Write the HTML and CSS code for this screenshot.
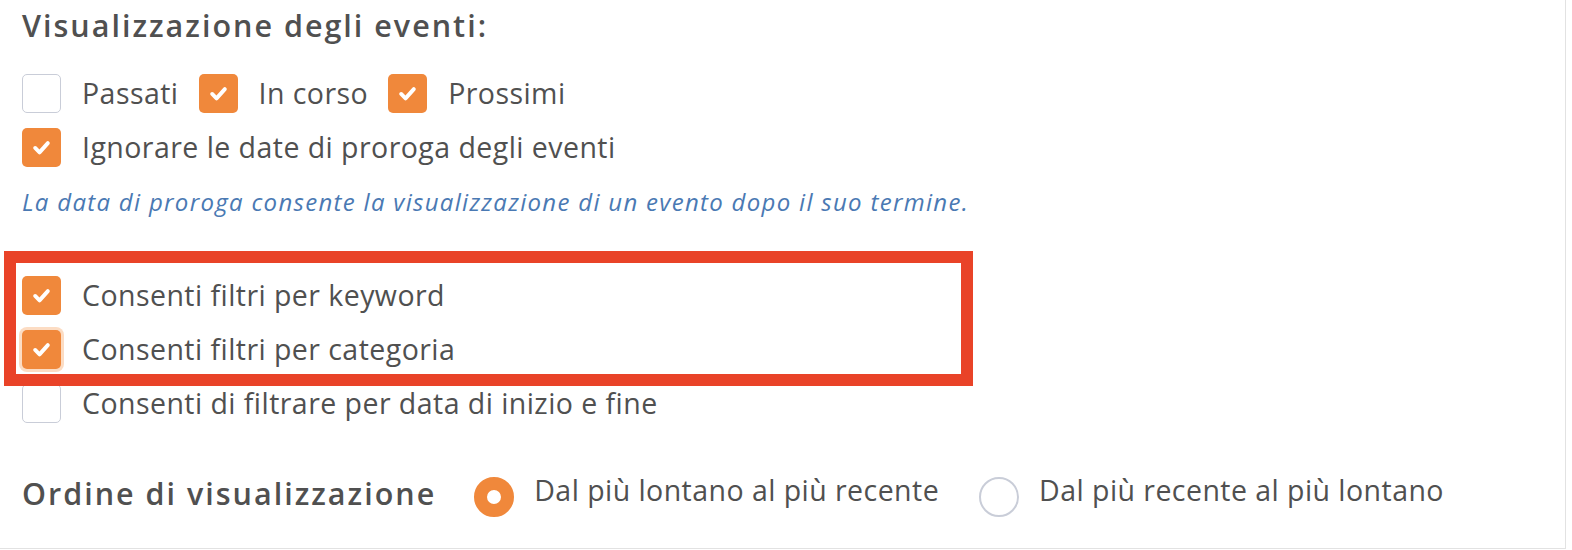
FILE: index.html
```html
<!DOCTYPE html>
<html lang="it">
<head>
    <meta charset="utf-8"/>
    <title>Visualizzazione degli eventi</title>
    <link rel="stylesheet" href="styles.css">
</head>
<body>
    <div class="panel">
        <div class="heading">Visualizzazione degli eventi:</div>

        <div class="row">
            <label class="check"><span class="box"></span>Passati</label>
            <label class="check"><span class="box checked"><svg viewBox="0 0 40 40"><polyline points="13.5,20.5 18,25 26.5,15.5"/></svg></span>In corso</label>
            <label class="check"><span class="box checked"><svg viewBox="0 0 40 40"><polyline points="13.5,20.5 18,25 26.5,15.5"/></svg></span>Prossimi</label>
        </div>
        <div class="row">
            <label class="check"><span class="box checked"><svg viewBox="0 0 40 40"><polyline points="13.5,20.5 18,25 26.5,15.5"/></svg></span>Ignorare le date di proroga degli eventi</label>
        </div>
        <div class="row help">La data di proroga consente la visualizzazione di un evento dopo il suo termine.</div>

        <div class="highlight">
            <div class="row">
                <label class="check"><span class="box checked"><svg viewBox="0 0 40 40"><polyline points="13.5,20.5 18,25 26.5,15.5"/></svg></span>Consenti filtri per keyword</label>
            </div>
            <div class="row">
                <label class="check"><span class="box checked focused"><svg viewBox="0 0 40 40"><polyline points="13.5,20.5 18,25 26.5,15.5"/></svg></span>Consenti filtri per categoria</label>
            </div>
        </div>
        <div class="row">
            <label class="check"><span class="box"></span>Consenti di filtrare per data di inizio e fine</label>
        </div>

        <div class="row order">
            <div class="order-title">Ordine di visualizzazione</div>
            <label class="radio"><span class="dot selected"></span><span class="radio-text">Dal più lontano al più recente</span></label>
            <label class="radio"><span class="dot"></span><span class="radio-text">Dal più recente al più lontano</span></label>
        </div>
    </div>
</body>
</html>
```

FILE: styles.css
```css
body {
    margin: 0;
    background: white;
    font-family: 'Open Sans', 'Lato', sans-serif;
    color: #505050;
}

.panel {
    width: 1566px;
    height: 549px;
    box-sizing: border-box;
    padding-left: 22px;
    border-right: 1px solid #e2e2e2;
    border-bottom: 1px solid #e2e2e2;
}

.heading {
    font-size: 30.5px;
    font-weight: 600;
    letter-spacing: 2px;
    line-height: 40px;
    padding-top: 5px;
    margin-bottom: 21px;
}

.row {
    height: 54px;
    display: flex;
    align-items: center;
}

.check {
    display: flex;
    align-items: center;
    gap: 21px;
    font-size: 28.5px;
    letter-spacing: 0.45px;
    margin-right: 20px;
}

.box {
    width: 39px;
    height: 39px;
    box-sizing: border-box;
    border: 1.5px solid #c9cdd8;
    border-radius: 5px;
    background: white;
    flex-shrink: 0;
}

.box.checked {
    border: none;
    background-color: #f0883b;
}

.box.focused {
    box-shadow: 0 0 0 3px #fcdcc3;
}

.box svg {
    display: block;
    width: 39px;
    height: 39px;
}

.box polyline {
    fill: none;
    stroke: white;
    stroke-width: 4;
    stroke-linecap: round;
    stroke-linejoin: round;
}

.help {
    font-size: 24px;
    font-style: italic;
    letter-spacing: 1.3px;
    color: #4a79b3;
}

.highlight {
    position: relative;
    margin-top: 40px;
}

.highlight::after {
    content: '';
    position: absolute;
    top: -17px;
    left: -18px;
    width: 969px;
    height: 135px;
    box-sizing: border-box;
    border: 12px solid #e94328;
}

.order {
    margin-top: 40px;
}

.order-title {
    font-size: 30.5px;
    font-weight: 600;
    letter-spacing: 2px;
    padding-bottom: 9px;
    margin-right: 38px;
}

.radio {
    display: flex;
    align-items: center;
    gap: 20px;
    font-size: 28.5px;
    letter-spacing: 0.45px;
    margin-right: 40px;
}

.radio-text {
    padding-bottom: 14px;
}

.radio .dot {
    width: 40px;
    height: 40px;
    box-sizing: border-box;
    border: 2px solid #c9cdd8;
    border-radius: 50%;
    flex-shrink: 0;
}

.radio .dot.selected {
    border: 13px solid #f0883b;
}
```
